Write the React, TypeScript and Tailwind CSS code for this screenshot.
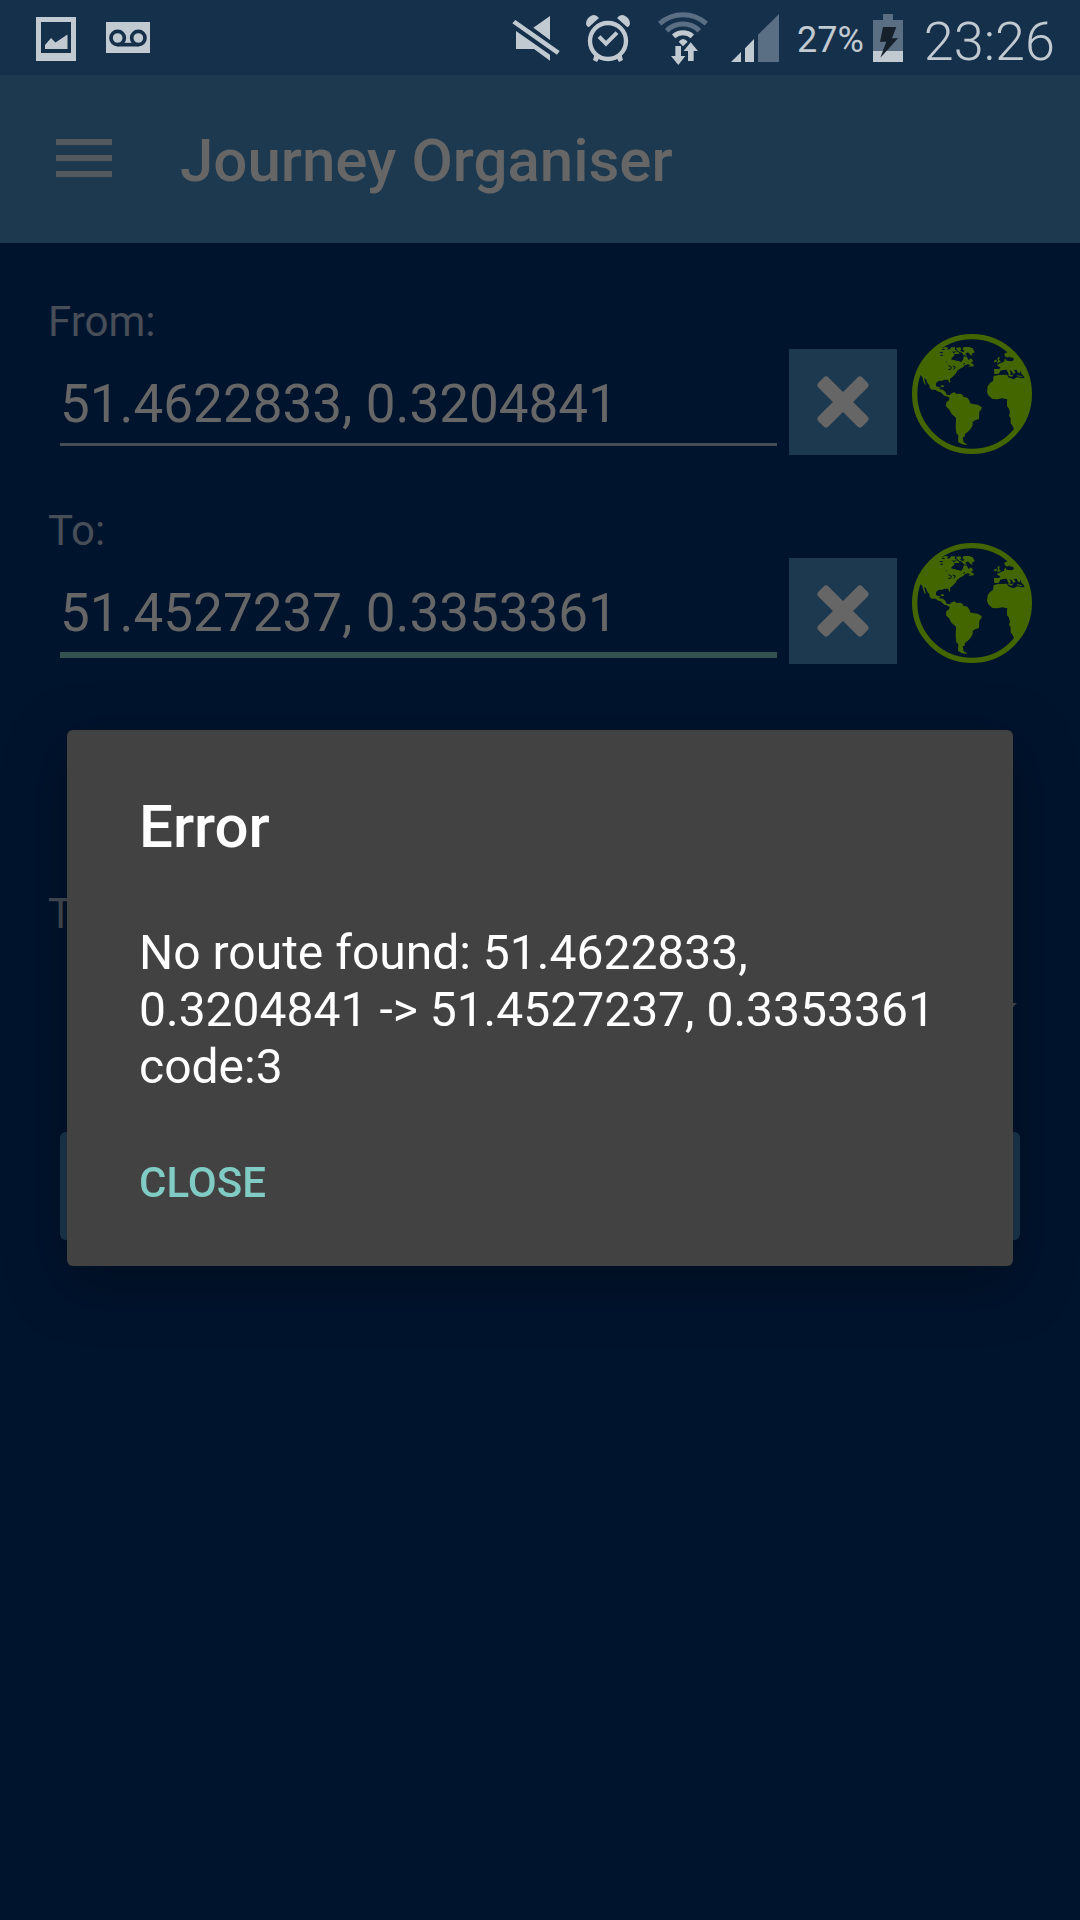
import React, { useState } from "react";

const BRIGHT = "#c2cad1";
const DIM = "#5a6e84";

function PictureIcon() {
  return (
    <svg viewBox="0 0 40 44" className="h-11 w-10" aria-hidden="true">
      <path fill={BRIGHT} fillRule="evenodd" d="M0 0H40V44H0ZM5 5V36H35V5Z" />
      <path fill={BRIGHT} d="M9 28L15 21L19.500 25.500L31.500 17.500V32H9Z" />
    </svg>
  );
}

function VoicemailIcon() {
  return (
    <svg viewBox="0 0 132 93" className="h-[31px] w-11" aria-hidden="true">
      <rect width="132" height="93" fill={BRIGHT} />
      <g fill="none" stroke="#15304b" strokeWidth="11">
        <circle cx="35" cy="48" r="20" />
        <circle cx="97" cy="48" r="20" />
        <path d="M35 68H97" />
      </g>
    </svg>
  );
}

function MuteIcon() {
  return (
    <svg viewBox="66 45 144 141" className="h-[47px] w-12" aria-hidden="true">
      <g fill={BRIGHT}>
        <path d="M76 60L209 153L201 164L67 70Z" />
        <path d="M180 48V120L130 83Z" />
        <path d="M78 93L180 164V182L132 147H78Z" />
      </g>
    </svg>
  );
}

function AlarmIcon() {
  return (
    <svg viewBox="285 42 138 147" className="h-[49px] w-[46px]" aria-hidden="true">
      <circle cx="354" cy="123" r="54" fill="none" stroke={BRIGHT} strokeWidth="13" />
      <path d="M327 110L348 131L381 98" fill="none" stroke={BRIGHT} strokeWidth="12" />
      <g fill={BRIGHT}>
        <path d="M327 54Q318 43 307 46Q288 54 288 72Q290 80 296 82Z" />
        <path d="M381 54Q390 43 401 46Q420 54 420 72Q418 80 412 82Z" />
        <path d="M313 166L328 174L321 186L309 180Z" />
        <path d="M395 166L380 174L387 186L399 180Z" />
      </g>
    </svg>
  );
}

function WifiIcon() {
  return (
    <svg viewBox="504 30 150 165" className="h-[55px] w-[50px]" aria-hidden="true">
      <g fill="none" strokeWidth="15">
        <path stroke={DIM} d="M509 68A104 104 0 0 1 649 68" />
        <path stroke={DIM} d="M530 89A70 70 0 0 1 628 89" />
        <path stroke={BRIGHT} d="M551 106A42 42 0 0 1 607 106" />
      </g>
      <g fill={BRIGHT}>
        <path d="M566 122Q579 106 593 122L579 136Z" />
        <path stroke="#15304b" strokeWidth="3" paintOrder="stroke" d="M556 135H573V165H586L565 192L543 165H556Z" />
        <path stroke="#15304b" strokeWidth="3" paintOrder="stroke" d="M602 124L624 150H611V180H594V150H581Z" />
      </g>
    </svg>
  );
}

function SignalIcon() {
  return (
    <svg viewBox="723 42 144 144" className="size-12" aria-hidden="true">
      <path fill={BRIGHT} d="M723 186H753V156ZM765 186H792V117L765 145Z" />
      <path fill={DIM} d="M804 186H867V42L804 104Z" />
    </svg>
  );
}

function BatteryIcon() {
  return (
    <svg viewBox="276 39 90 144" className="h-12 w-[30px]" aria-hidden="true">
      <path fill={DIM} d="M306 39H336V57H366V150H276V57H306Z" />
      <rect x="276" y="150" width="90" height="33" fill={BRIGHT} />
      <path fill="#15202b" d="M306 78H346L333 112H351L298 170L316 122H297Z" />
    </svg>
  );
}

function CrossIcon() {
  return (
    <svg viewBox="-80 -80 160 160" className="size-[54px]" aria-hidden="true">
      <g fill="#666666">
        <rect x="-92" y="-21" width="184" height="42" rx="11" transform="rotate(45)" />
        <rect x="-92" y="-21" width="184" height="42" rx="11" transform="rotate(-45)" />
      </g>
    </svg>
  );
}

function GlobeIcon() {
  return (
    <svg viewBox="36 27 360 360" className="size-[120px]" aria-hidden="true">
      <circle cx="216" cy="207" r="172" fill="none" stroke="#436600" strokeWidth="16" />
      <g fill="#436600">
        {/* North and Central America */}
        <path d="M48 160L61 150L67 156L69 166L73 176L78 181L75 170L72 159L78 163L82 173L88 181L89 189L95 194L106 194L115 200L122 202L128 208L134 213L146 214L150 211L140 209L136 200L128 194L119 193L118 188L125 185L130 187L133 182L125 180L122 185L114 187L108 183L108 174L117 167L128 167L133 164L144 164L148 173L151 171L150 162L160 153L167 146L171 138L182 130L190 126L194 121L203 118L211 120L205 125L222 124L220 118L212 113L220 109L213 100L205 105L201 95L191 94L188 104L184 111L176 108L166 106L154 101L159 95L168 88L177 89L178 83L170 79L161 85L154 78L143 75L132 71L124 68L118 64L108 70L82 94L58 128Z" />
        {/* Arctic islands */}
        <path d="M122 72L135 65L145 68L141 74L150 73L153 67L166 67L164 74L174 78L160 80L148 78L135 80L125 78Z" />
        <path d="M167 69L181 67L184 73L180 77L188 81L194 78L187 73L191 66L208 66L218 70L224 82L215 86L218 94L209 88L204 82L196 86L201 93L190 90L186 83L177 80Z" />
        {/* South America */}
        <path d="M138 212L147 212L155 205L163 202L170 207L180 206L187 209L190 215L202 218L209 228L210 235L222 238L233 239L245 246L244 253L238 260L237 282L225 286L218 291L218 301L211 313L202 322L195 327L194 335L188 337L191 352L201 358L199 360L184 357L174 350L175 331L169 325L167 306L168 278L155 267L147 253L138 244L139 232L147 226L149 219Z" />
        {/* Africa */}
        <path d="M281 153L295 150L321 149L325 157L340 163L352 157L366 160L376 159L388 175L390 218L382 251L367 281L349 305L343 315L338 303L332 295L332 280L327 273L330 262L326 250L321 244L321 229L322 223L306 220L293 223L277 222L265 211L261 202L263 184L270 174L279 168Z" />
        {/* Europe */}
        <path d="M283 147L282 132L298 132L301 127L293 123L291 119L303 114L312 110L315 100L320 107L334 109L341 106L341 98L327 97L330 93L322 98L314 93L313 86L322 82L332 73L347 84L366 109L380 143L387 159L374 156L364 146L363 137L359 145L354 143L350 134L342 135L347 144L340 146L335 138L328 136L333 144L327 150L320 134L311 135L301 137L297 146L288 147Z" />
        <path d="M292 98L300 96L297 104L303 111L290 114L294 107ZM284 105L291 104L289 111L281 112ZM325 148L335 150L341 147L336 155L326 153ZM350 150L364 153L369 157L352 154Z" />
      </g>
      <g stroke="#00142e" strokeWidth="3" fill="none">
        <path d="M119 83H129M121 91H129M126 73H134M138 111H140M145 122L154 126L152 134M158 123L166 126L161 134M190 118L195 115M145 133H150M162 89L176 88L170 96" />
        <path d="M178 90L188 91L188 104L178 107L165 104L155 102L161 98Z" fill="#00142e" />
      </g>
    </svg>
  );
}

function StatusBar() {
  return (
    <header className="flex h-[75px] items-center bg-[#15304b] text-[#c2cad1]">
      <div className="flex flex-1 items-center gap-[30px] pl-9">
        <div className="pt-[3px]">
          <PictureIcon />
        </div>
        <VoicemailIcon />
      </div>
      <div className="flex items-center pt-px pr-[25px]">
        <MuteIcon />
        <div className="ml-[25px]">
          <AlarmIcon />
        </div>
        <div className="ml-[27px]">
          <WifiIcon />
        </div>
        <div className="ml-[23px]">
          <SignalIcon />
        </div>
        <span className="ml-[18px] pt-1 text-[36px] leading-[42px]">27%</span>
        <div className="ml-[9px]">
          <BatteryIcon />
        </div>
        <span className="ml-[21px] pt-[7px] text-[54px] leading-[64px] font-light">23:26</span>
      </div>
    </header>
  );
}

function AppBar() {
  return (
    <div className="flex h-[168px] items-center gap-[68px] bg-[#1d3950] px-14">
      <button type="button" aria-label="Menu" className="mb-0.5 flex w-14 flex-col gap-2.5">
        <span className="h-1.5 bg-[#53595f]" />
        <span className="h-1.5 bg-[#53595f]" />
        <span className="h-1.5 bg-[#53595f]" />
      </button>
      <h1 className="pt-1 text-[60px] leading-[70px] font-medium text-[#666666]">Journey Organiser</h1>
    </div>
  );
}

interface PlaceFieldProps {
  id: string;
  label: string;
  initial: string;
  active?: boolean;
}

function PlaceField({ id, label, initial, active = false }: PlaceFieldProps) {
  const [value, setValue] = useState(initial);
  return (
    <div className="flex items-end">
      <div className={active ? "flex min-w-0 flex-1 flex-col pb-1.5" : "flex min-w-0 flex-1 flex-col pb-[9px]"}>
        <label htmlFor={id} className="text-[42px] leading-[50px] text-[#484e57]">
          {label}
        </label>
        <input
          id={id}
          value={value}
          onChange={(event) => setValue(event.target.value)}
          className={
            active
              ? "mt-[25px] ml-3 border-b-6 border-[#33514f] pb-[7px] text-[53px] leading-[64px] text-[#666666] outline-none"
              : "mt-[25px] ml-3 border-b-3 border-[#474d56] pb-[7px] text-[53px] leading-[64px] text-[#666666] outline-none"
          }
        />
      </div>
      <button
        type="button"
        aria-label={`Clear ${label}`}
        onClick={() => setValue("")}
        className="ml-3 flex h-[106px] w-[108px] items-center justify-center bg-[#1d3950]"
      >
        <CrossIcon />
      </button>
      <button type="button" aria-label={`Pick on map ${label}`} className="mb-px ml-[15px]">
        <GlobeIcon />
      </button>
    </div>
  );
}

function ErrorDialog({ onClose }: { onClose: () => void }) {
  return (
    <div className="fixed inset-x-0 top-[75px] bottom-0 flex items-center justify-center px-[67px]">
      <div
        role="alertdialog"
        aria-labelledby="error-title"
        aria-describedby="error-message"
        className="w-full max-w-[960px] rounded-md bg-[#424242] px-[72px] pt-[62px] pb-[58px] text-white shadow-[0_16px_60px_rgba(0,0,0,0.35)]"
      >
        <h2 id="error-title" className="text-[60px] leading-[70px] font-medium">
          Error
        </h2>
        <p id="error-message" className="mt-[62px] text-[48px] leading-[57px]">
          No route found: 51.4622833, 0.3204841 -&gt; 51.4527237, 0.3353361 code:3
        </p>
        <button
          type="button"
          onClick={onClose}
          className="mt-[63px] block text-[42px] leading-[50px] font-medium text-[#80cbc4]"
        >
          CLOSE
        </button>
      </div>
    </div>
  );
}

export default function App() {
  const [open, setOpen] = useState(true);
  return (
    <div className="flex min-h-screen flex-col bg-[#00142e] font-['Roboto',sans-serif]">
      <StatusBar />
      <AppBar />
      <main className="flex flex-1 flex-col px-12 pt-[54px]">
        <div className="flex flex-col gap-[51px]">
          <PlaceField id="from" label="From:" initial="51.4622833, 0.3204841" />
          <PlaceField id="to" label="To:" initial="51.4527237, 0.3353361" active />
        </div>
        <label htmlFor="mode" className="mt-[225px] text-[42px] leading-[50px] text-[#484e57]">
          T
        </label>
        <div className="relative mx-3 mt-[35px]">
          <select id="mode" className="h-[72px] w-full appearance-none bg-transparent" />
          <svg
            viewBox="0 0 30 15"
            className="pointer-events-none absolute top-[29px] right-[3px] h-[15px] w-[30px]"
            aria-hidden="true"
          >
            <path fill="#474d56" d="M0 0H30L15 15Z" />
          </svg>
        </div>
        <button type="button" aria-label="Find route" className="mx-3 mt-[86px] h-[108px] rounded-md bg-[#1d3950]" />
      </main>
      {open && <ErrorDialog onClose={() => setOpen(false)} />}
    </div>
  );
}
